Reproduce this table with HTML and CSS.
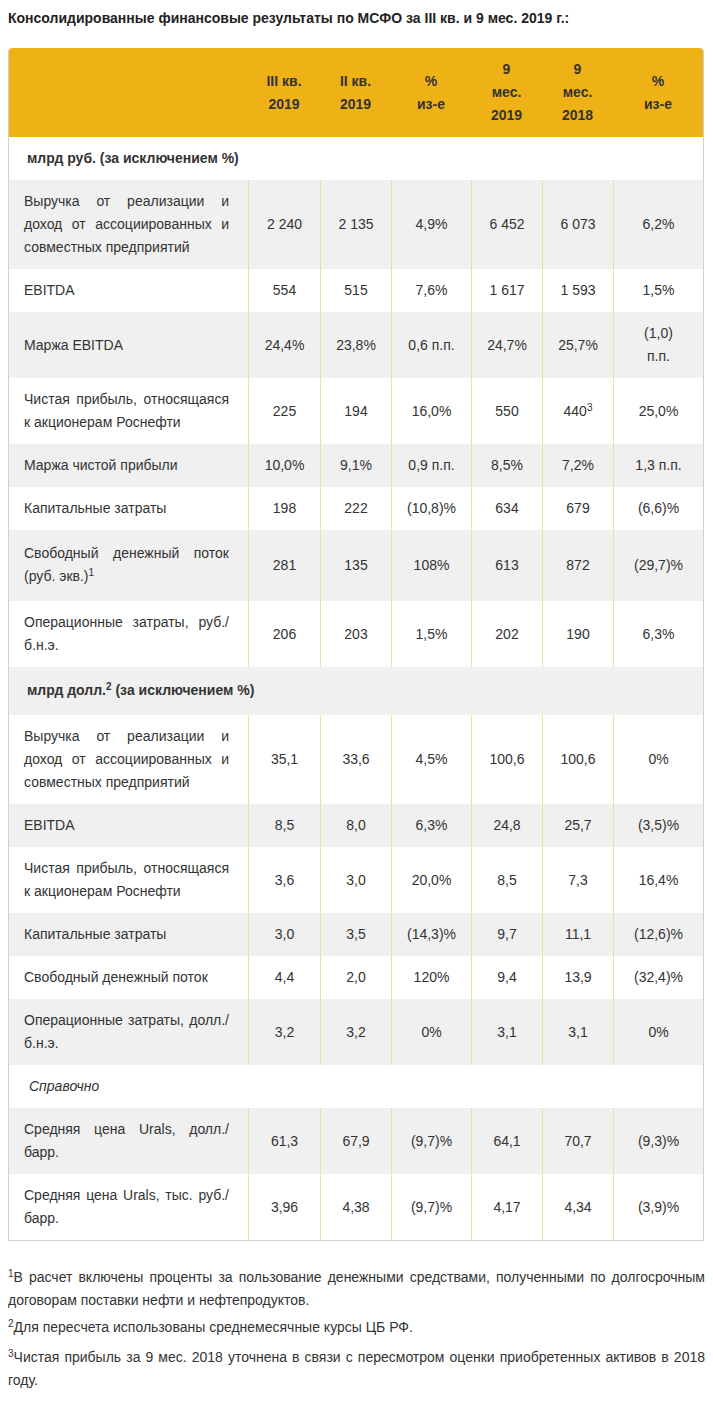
FILE: index.html
```html
<!DOCTYPE html>
<html lang="ru">
<head>
<meta charset="utf-8">
<link rel="stylesheet" href="styles.css">
</head>
<body>
<p class="title">Консолидированные финансовые результаты по МСФО за III кв. и 9 мес. 2019 г.:</p>
<table class="fin">
<colgroup>
<col class="c-label"><col class="c-q"><col class="c-q2"><col class="c-pct"><col class="c-m"><col class="c-m"><col>
</colgroup>
<thead>
<tr><th></th><th>III кв.<br>2019</th><th>II кв.<br>2019</th><th>%<br>из-е</th><th>9<br>мес.<br>2019</th><th>9<br>мес.<br>2018</th><th>%<br>из-е</th></tr>
</thead>
<tbody>
<tr class="sec"><td colspan="7">млрд руб. (за исключением %)</td></tr>
<tr class="g"><td class="lbl">Выручка от реализации и доход от ассоциированных и совместных предприятий</td><td>2 240</td><td>2 135</td><td>4,9%</td><td>6 452</td><td>6 073</td><td>6,2%</td></tr>
<tr><td class="lbl">EBITDA</td><td>554</td><td>515</td><td>7,6%</td><td>1 617</td><td>1 593</td><td>1,5%</td></tr>
<tr class="g"><td class="lbl">Маржа EBITDA</td><td>24,4%</td><td>23,8%</td><td>0,6 п.п.</td><td>24,7%</td><td>25,7%</td><td>(1,0)<br>п.п.</td></tr>
<tr><td class="lbl">Чистая прибыль, относящаяся к акционерам Роснефти</td><td>225</td><td>194</td><td>16,0%</td><td>550</td><td>440<sup>3</sup></td><td>25,0%</td></tr>
<tr class="g"><td class="lbl">Маржа чистой прибыли</td><td>10,0%</td><td>9,1%</td><td>0,9 п.п.</td><td>8,5%</td><td>7,2%</td><td>1,3 п.п.</td></tr>
<tr><td class="lbl">Капитальные затраты</td><td>198</td><td>222</td><td>(10,8)%</td><td>634</td><td>679</td><td>(6,6)%</td></tr>
<tr class="g tall"><td class="lbl">Свободный денежный поток (руб. экв.)<sup>1</sup></td><td>281</td><td>135</td><td>108%</td><td>613</td><td>872</td><td>(29,7)%</td></tr>
<tr><td class="lbl">Операционные затраты, руб./ б.н.э.</td><td>206</td><td>203</td><td>1,5%</td><td>202</td><td>190</td><td>6,3%</td></tr>
<tr class="sec g tall"><td colspan="7">млрд долл.<sup>2</sup> (за исключением %)</td></tr>
<tr><td class="lbl">Выручка от реализации и доход от ассоциированных и совместных предприятий</td><td>35,1</td><td>33,6</td><td>4,5%</td><td>100,6</td><td>100,6</td><td>0%</td></tr>
<tr class="g"><td class="lbl">EBITDA</td><td>8,5</td><td>8,0</td><td>6,3%</td><td>24,8</td><td>25,7</td><td>(3,5)%</td></tr>
<tr><td class="lbl">Чистая прибыль, относящаяся к акционерам Роснефти</td><td>3,6</td><td>3,0</td><td>20,0%</td><td>8,5</td><td>7,3</td><td>16,4%</td></tr>
<tr class="g"><td class="lbl">Капитальные затраты</td><td>3,0</td><td>3,5</td><td>(14,3)%</td><td>9,7</td><td>11,1</td><td>(12,6)%</td></tr>
<tr><td class="lbl">Свободный денежный поток</td><td>4,4</td><td>2,0</td><td>120%</td><td>9,4</td><td>13,9</td><td>(32,4)%</td></tr>
<tr class="g"><td class="lbl">Операционные затраты, долл./ б.н.э.</td><td>3,2</td><td>3,2</td><td>0%</td><td>3,1</td><td>3,1</td><td>0%</td></tr>
<tr class="ref"><td colspan="7">Справочно</td></tr>
<tr class="g"><td class="lbl">Средняя цена Urals, долл./ барр.</td><td>61,3</td><td>67,9</td><td>(9,7)%</td><td>64,1</td><td>70,7</td><td>(9,3)%</td></tr>
<tr><td class="lbl">Средняя цена Urals, тыс. руб./ барр.</td><td>3,96</td><td>4,38</td><td>(9,7)%</td><td>4,17</td><td>4,34</td><td>(3,9)%</td></tr>
</tbody>
</table>
<div class="notes">
<p><sup>1</sup>В расчет включены проценты за пользование денежными средствами, полученными по долгосрочным договорам поставки нефти и нефтепродуктов.</p>
<p><sup>2</sup>Для пересчета использованы среднемесячные курсы ЦБ РФ.</p>
<p class="n3"><sup>3</sup>Чистая прибыль за 9 мес. 2018 уточнена в связи с пересмотром оценки приобретенных активов в 2018 году.</p>
</div>
</body>
</html>
```

FILE: styles.css
```css
body {
  margin: 8px;
  font-family: "Liberation Sans", Arial, sans-serif;
  font-size: 14px;
  color: #333;
  background: #fff;
}
.title {
  margin: 0 0 20px;
  font-weight: bold;
  line-height: 20px;
  color: #222;
}
.fin {
  width: 696px;
  border-collapse: separate;
  border-spacing: 0;
  border: 1px solid #d0d0d0;
  border-top: none;
  border-radius: 4px 4px 0 0;
  line-height: 23px;
}
.c-label { width: 239px; }
.c-q { width: 72px; }
.c-q2 { width: 71px; }
.c-pct { width: 80px; }
.c-m { width: 71px; }
.fin thead th {
  background: #efb216;
  font-weight: bold;
  color: #333;
  padding: 10px 4px;
  text-align: center;
  vertical-align: middle;
}
.fin thead th:first-child { border-radius: 4px 0 0 0; }
.fin thead th:last-child { border-radius: 0 4px 0 0; }
.fin td {
  padding: 10px 4px;
  text-align: center;
  vertical-align: middle;
  border-left: 1px solid #f0e19a;
}
.fin td:first-child { border-left: none; }
.fin td.lbl {
  text-align: justify;
  padding: 10px 19px 10px 15px;
}
.fin tr.g td { background: #f0f0f0; }
.fin tr.sec td {
  font-weight: bold;
  text-align: left;
  padding: 10px 18px;
  border-left: none;
}
.fin tr.ref td {
  font-style: italic;
  text-align: left;
  padding: 10px 20px;
  border-left: none;
}
.fin tr.tall td { padding-top: 12px; padding-bottom: 13px; }
sup {
  font-size: 10px;
  line-height: 0;
  vertical-align: 5px;
}
.notes {
  margin-top: 25px;
}
.notes p {
  margin: 0 0 4px;
  line-height: 23px;
  text-align: justify;
  color: #333;
}
.notes p.n3 { margin-top: 7px; }
```
